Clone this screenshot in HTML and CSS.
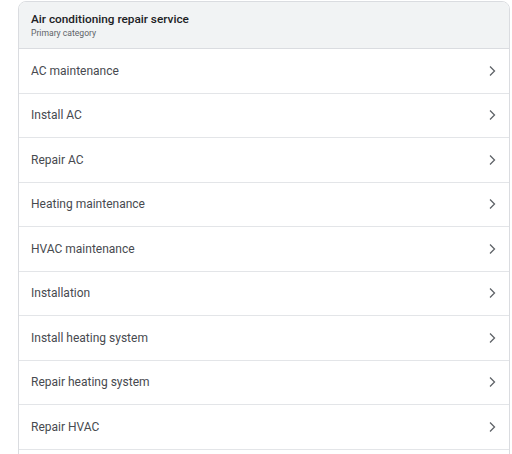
FILE: index.html
```html
<!DOCTYPE html>
<html>
<head>
<meta charset="utf-8">
<link rel="stylesheet" href="styles.css">
</head>
<body>
<div class="card">
  <div class="header">
    <div class="title">Air conditioning repair service</div>
    <div class="subtitle">Primary category</div>
  </div>
  <div class="row"><span class="label">AC maintenance</span><svg class="chev" viewBox="0 0 10 12"><path d="M3 1.5L7.5 6 3 10.5"/></svg></div>
  <div class="row"><span class="label">Install AC</span><svg class="chev" viewBox="0 0 10 12"><path d="M3 1.5L7.5 6 3 10.5"/></svg></div>
  <div class="row"><span class="label">Repair AC</span><svg class="chev" viewBox="0 0 10 12"><path d="M3 1.5L7.5 6 3 10.5"/></svg></div>
  <div class="row"><span class="label">Heating maintenance</span><svg class="chev" viewBox="0 0 10 12"><path d="M3 1.5L7.5 6 3 10.5"/></svg></div>
  <div class="row"><span class="label">HVAC maintenance</span><svg class="chev" viewBox="0 0 10 12"><path d="M3 1.5L7.5 6 3 10.5"/></svg></div>
  <div class="row"><span class="label">Installation</span><svg class="chev" viewBox="0 0 10 12"><path d="M3 1.5L7.5 6 3 10.5"/></svg></div>
  <div class="row"><span class="label">Install heating system</span><svg class="chev" viewBox="0 0 10 12"><path d="M3 1.5L7.5 6 3 10.5"/></svg></div>
  <div class="row"><span class="label">Repair heating system</span><svg class="chev" viewBox="0 0 10 12"><path d="M3 1.5L7.5 6 3 10.5"/></svg></div>
  <div class="row"><span class="label">Repair HVAC</span><svg class="chev" viewBox="0 0 10 12"><path d="M3 1.5L7.5 6 3 10.5"/></svg></div>
</div>
</body>
</html>
```
FILE: styles.css
```css
html, body {
  margin: 0;
  padding: 0;
  background: #ffffff;
  font-family: Roboto, "Liberation Sans", Arial, sans-serif;
  overflow: hidden;
}
body {
  padding: 1px 2px 0 18px;
}
.card {
  border: 1px solid #dadce0;
  border-radius: 8px;
  overflow: hidden;
  background: #fff;
  padding-bottom: 20px;
}
.header {
  background: #f1f3f4;
  height: 47px;
  box-sizing: border-box;
  padding: 9px 12px 0;
  border-bottom: 1px solid #dadce0;
}
.title {
  font-size: 11.8px;
  font-weight: 500;
  color: #202124;
  line-height: 16px;
}
.subtitle {
  font-size: 8.6px;
  color: #5f6368;
  line-height: 12px;
}
.row {
  display: flex;
  align-items: center;
  justify-content: space-between;
  height: 43.5px;
  padding: 0 12px 0 12px;
  border-bottom: 1px solid #e3e5e8;
}
.label {
  font-size: 12px;
  color: #474a4f;
}
.chev {
  width: 10px;
  height: 12px;
  fill: none;
  stroke: #5f6368;
  stroke-width: 1.3;
}
```
